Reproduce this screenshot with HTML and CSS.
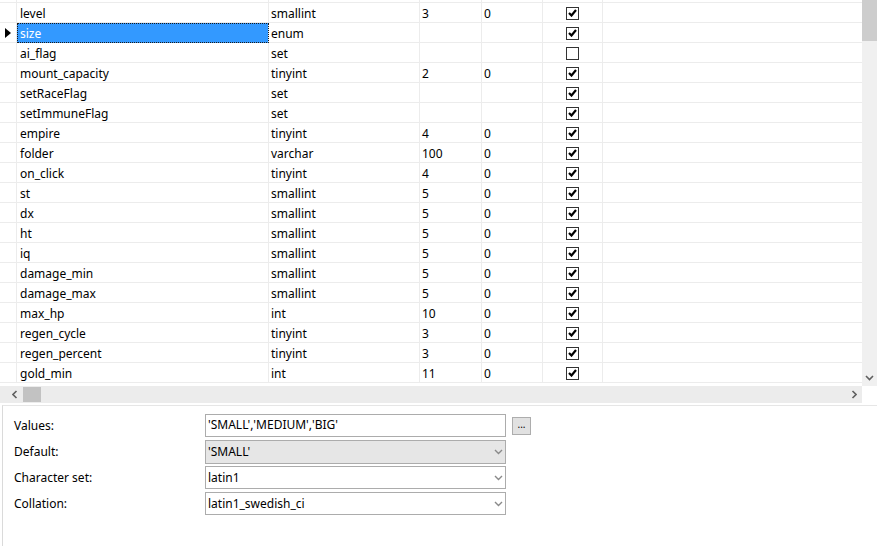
FILE: index.html
```html
<!DOCTYPE html>
<html lang="en">
<head>
  <meta charset="UTF-8">
  <title>Table columns</title>
  <link rel="stylesheet" href="styles.css">
</head>
<body>

<div class="grid-area">
  <div class="grid-view">
    <div class="grid-row stub">
      <div class="cell"></div><div class="cell"></div><div class="cell"></div><div class="cell"></div><div class="cell"></div><div class="cell"></div><div class="cell last"></div>
    </div>
    <div id="rows"></div>
  </div>
  <div class="vscroll">
    <div class="vthumb"></div>
    <div class="vspace"></div>
    <div class="sb-btn">
      <svg width="9" height="6" viewBox="0 0 9 6"><polyline points="1,1 4.5,4.5 8,1" fill="none" stroke="#606060" stroke-width="1.6"/></svg>
    </div>
  </div>
</div>

<div class="hscroll-row">
  <div class="hscroll">
    <div class="sb-btn h">
      <svg width="6" height="9" viewBox="0 0 6 9"><polyline points="4.5,1 1,4.5 4.5,8" fill="none" stroke="#606060" stroke-width="1.6"/></svg>
    </div>
    <div class="hthumb"></div>
    <div class="hspace"></div>
    <div class="sb-btn h">
      <svg width="6" height="9" viewBox="0 0 6 9"><polyline points="1.5,1 5,4.5 1.5,8" fill="none" stroke="#606060" stroke-width="1.6"/></svg>
    </div>
  </div>
  <div class="corner"></div>
</div>

<div class="props">
  <div class="form">
    <div class="lbl">Values:</div>
    <div class="field">'SMALL','MEDIUM','BIG'</div>
    <div class="dots">...</div>

    <div class="lbl">Default:</div>
    <div class="field combo readonly"><span>'SMALL'</span><svg width="9" height="6" viewBox="0 0 9 6"><polyline points="1,1 4.5,4.5 8,1" fill="none" stroke="#8a8a8a" stroke-width="1.4"/></svg></div>
    <div></div>

    <div class="lbl">Character set:</div>
    <div class="field combo"><span>latin1</span><svg width="9" height="6" viewBox="0 0 9 6"><polyline points="1,1 4.5,4.5 8,1" fill="none" stroke="#8a8a8a" stroke-width="1.4"/></svg></div>
    <div></div>

    <div class="lbl">Collation:</div>
    <div class="field combo"><span>latin1_swedish_ci</span><svg width="9" height="6" viewBox="0 0 9 6"><polyline points="1,1 4.5,4.5 8,1" fill="none" stroke="#8a8a8a" stroke-width="1.4"/></svg></div>
    <div></div>
  </div>
</div>

<script>
  const columns = [
    ['level', 'smallint', '3', '0', true],
    ['size', 'enum', '', '', true],
    ['ai_flag', 'set', '', '', false],
    ['mount_capacity', 'tinyint', '2', '0', true],
    ['setRaceFlag', 'set', '', '', true],
    ['setImmuneFlag', 'set', '', '', true],
    ['empire', 'tinyint', '4', '0', true],
    ['folder', 'varchar', '100', '0', true],
    ['on_click', 'tinyint', '4', '0', true],
    ['st', 'smallint', '5', '0', true],
    ['dx', 'smallint', '5', '0', true],
    ['ht', 'smallint', '5', '0', true],
    ['iq', 'smallint', '5', '0', true],
    ['damage_min', 'smallint', '5', '0', true],
    ['damage_max', 'smallint', '5', '0', true],
    ['max_hp', 'int', '10', '0', true],
    ['regen_cycle', 'tinyint', '3', '0', true],
    ['regen_percent', 'tinyint', '3', '0', true],
    ['gold_min', 'int', '11', '0', true]
  ];

  const selected = 'size';
  const check = '<svg width="9" height="8" viewBox="0 0 9 8"><polyline points="1,4 3.5,6.5 8,1" fill="none" stroke="#000" stroke-width="2.2"/></svg>';
  const arrow = '<svg width="6" height="10" viewBox="0 0 6 10"><polygon points="0,0 6,5 0,10" fill="#000"/></svg>';

  const rows = document.getElementById('rows');
  columns.forEach(col => {
    const row = document.createElement('div');
    row.className = 'grid-row';
    const isSel = col[0] === selected;
    row.innerHTML =
      '<div class="cell head">' + (isSel ? arrow : '') + '</div>' +
      '<div class="cell name' + (isSel ? ' sel' : '') + '">' + col[0] + '</div>' +
      '<div class="cell">' + col[1] + '</div>' +
      '<div class="cell">' + col[2] + '</div>' +
      '<div class="cell">' + col[3] + '</div>' +
      '<div class="cell center"><span class="chk">' + (col[4] ? check : '') + '</span></div>' +
      '<div class="cell last"></div>';
    rows.appendChild(row);
  });
</script>

</body>
</html>
```

FILE: styles.css
```css
body {
  margin: 0;
  background: #fff;
  color: #000;
  font-family: 'Noto Sans', 'Open Sans', sans-serif;
  font-size: 12px;
  width: 877px;
  height: 546px;
  overflow: hidden;
  display: flex;
  flex-direction: column;
}

/* grid */
.grid-area {
  display: flex;
  height: 386px;
  flex-shrink: 0;
}

.grid-view {
  flex: 1;
  overflow: hidden;
  background: #fff;
}

.grid-row {
  display: grid;
  grid-template-columns: 17px 252px 151px 62px 61px 60px 1fr;
  height: 20px;
  border-bottom: 1px solid #ececec;
  box-sizing: border-box;
}

.grid-row.stub {
  height: 3px;
}

.cell {
  border-right: 1px solid #ececec;
  line-height: 19px;
  padding: 1px 0 0 2px;
  box-sizing: border-box;
  white-space: nowrap;
}

.grid-row.stub .cell {
  padding: 0;
}

.cell.last {
  border-right: none;
}

.cell.name {
  padding-left: 3px;
}

.cell.head {
  display: flex;
  align-items: center;
  padding: 0 0 0 5px;
}

.cell.sel {
  background: #3399ff;
  color: #fff;
  outline: 1px dotted #1a1a1a;
  outline-offset: -1px;
}

.cell.center {
  padding: 0;
  display: flex;
  align-items: center;
  justify-content: center;
}

.chk {
  width: 13px;
  height: 13px;
  box-sizing: border-box;
  border: 1px solid #333;
  background: #fff;
  display: flex;
  align-items: center;
  justify-content: center;
}

/* scrollbars */
.vscroll {
  width: 15px;
  background: #f0f0f0;
  display: flex;
  flex-direction: column;
}

.vthumb {
  height: 41px;
  background: #cdcdcd;
}

.vspace {
  flex: 1;
}

.sb-btn {
  height: 17px;
  display: flex;
  align-items: center;
  justify-content: center;
  flex-shrink: 0;
}

.sb-btn.h {
  width: 17px;
  height: 16px;
}

.hscroll-row {
  display: flex;
  height: 17px;
  flex-shrink: 0;
}

.hscroll {
  flex: 1;
  display: flex;
  align-items: center;
  background: #ececec;
  padding-left: 6px;
}

.hthumb {
  width: 18px;
  height: 15px;
  flex-shrink: 0;
  background: #c2c2c2;
}

.hspace {
  flex: 1;
}

.corner {
  width: 15px;
  background: #fff;
}

/* properties panel */
.props {
  flex: 1;
  margin: 2px 0 0 2px;
  border-top: 1px solid #e6e6e6;
  border-left: 1px solid #dadada;
  padding: 8px 0 0 11px;
}

.form {
  display: grid;
  grid-template-columns: 191px 301px 30px;
  grid-auto-rows: 23px;
  row-gap: 3px;
  align-items: center;
}

.lbl {
  color: #000;
}

.field {
  height: 23px;
  box-sizing: border-box;
  border: 1px solid #acacac;
  background: #fff;
  padding: 0 2px;
  line-height: 20px;
  white-space: nowrap;
}

.field.combo {
  display: flex;
  align-items: center;
  justify-content: space-between;
  padding-right: 2px;
}

.field.readonly {
  background: #e6e6e6;
  height: 24px;
}

.dots {
  margin-left: 6px;
  width: 19px;
  height: 18px;
  box-sizing: border-box;
  border: 1px solid #adadad;
  background: #e1e1e1;
  font-size: 10px;
  line-height: 13px;
  text-align: center;
}
```
